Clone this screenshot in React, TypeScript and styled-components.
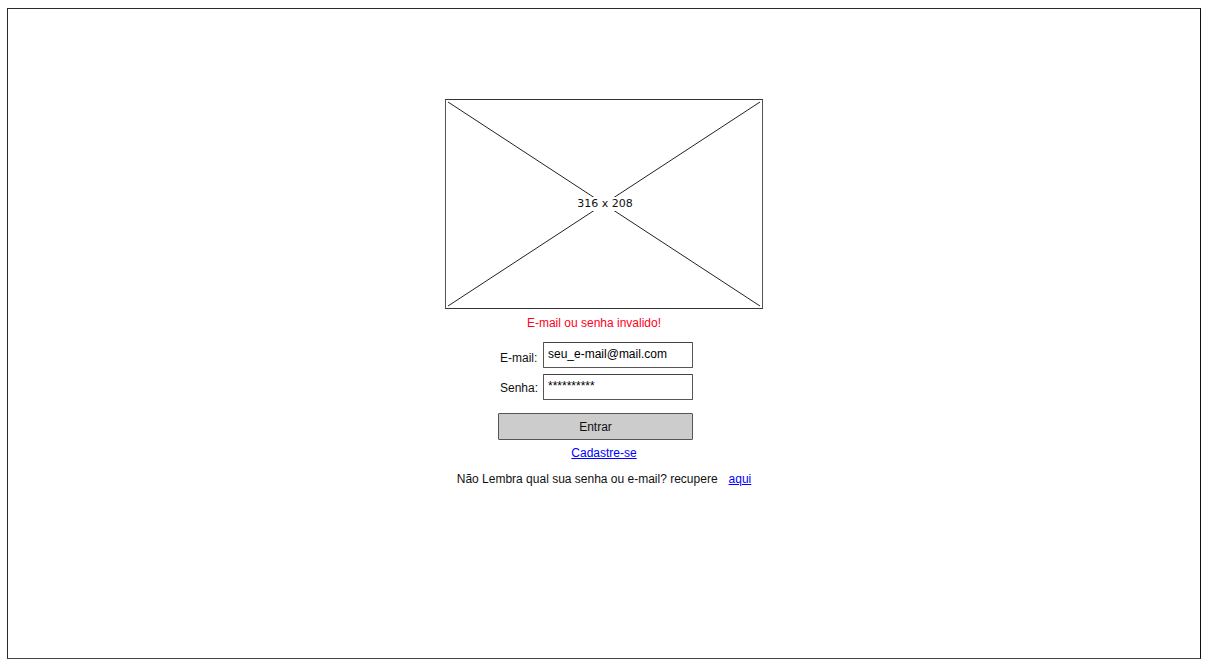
import React from "react";
import styled, { createGlobalStyle } from "styled-components";

const Global = createGlobalStyle`
  html, body { margin: 0; padding: 0; background: #fff; overflow: hidden; }
  body { font-family: "Liberation Sans", Arial, sans-serif; }
`;

const Frame = styled.div`
  margin: 8px 0 0 7px;
  width: 1194px;
  height: 651px;
  box-sizing: border-box;
  border: 1px solid #2a2a2a;
  border-right-color: #111;
  border-bottom-color: #444;
  display: flex;
  flex-direction: column;
  align-items: center;
  padding-top: 90px;
`;

const Placeholder = styled.div`
  position: relative;
  width: 316px;
  height: 208px;
  border: 1px solid #555;
  border-top-color: #333;
  border-bottom-color: #333;
  display: flex;
  align-items: center;
  justify-content: center;
`;

const Cross = styled.svg`
  position: absolute;
  inset: 0;
  width: 100%;
  height: 100%;
`;

const SizeLabel = styled.span`
  position: relative;
  background: #fff;
  padding: 0 3px;
  font-family: "DejaVu Sans", Tahoma, sans-serif;
  font-size: 11px;
  line-height: 14px;
  color: #111;
  margin-left: 2px;
`;

const ErrorText = styled.div`
  margin-top: 6px;
  font-size: 12px;
  line-height: 16px;
  color: #ff0022;
  margin-right: 20px;
`;

const Form = styled.div`
  margin-top: 11px;
  margin-right: 16px;
  display: grid;
  grid-template-columns: 44px 150px;
  row-gap: 6px;
  width: 194px;
`;

const Label = styled.label<{ $offset: number }>`
  font-size: 12px;
  line-height: 16px;
  color: #111;
  align-self: center;
  padding-left: 1px;
  padding-top: ${(p) => p.$offset}px;
`;

const Input = styled.div`
  box-sizing: border-box;
  height: 26px;
  border: 1.5px solid #555;
  border-top-color: #444;
  border-radius: 1px;
  padding: 3px 0 0 4px;
  font-size: 12px;
  line-height: 16px;
  color: #000;
  white-space: nowrap;
`;

const Button = styled.div`
  grid-column: 1 / span 2;
  margin-top: 7px;
  margin-left: -1px;
  box-sizing: border-box;
  height: 27px;
  background: #cccccc;
  border: 1.5px solid #555;
  border-radius: 1px;
  display: flex;
  align-items: center;
  justify-content: center;
  font-size: 12px;
  color: #111;
`;

const Link = styled.a`
  color: #0000ff;
  text-decoration: underline;
  font-size: 12px;
  line-height: 16px;
  cursor: pointer;
`;

const SignupRow = styled.div`
  margin-top: 4px;
  line-height: 16px;
`;

const RecoverRow = styled.div`
  margin-top: 10px;
  font-size: 12px;
  line-height: 16px;
  color: #111;
  display: flex;
  gap: 11px;
`;

export default function App() {
  return (
    <>
      <Global />
      <Frame>
        <Placeholder>
          <Cross viewBox="0 0 316 208" preserveAspectRatio="none">
            <line x1="2" y1="2" x2="314" y2="206" stroke="#222" strokeWidth="1" />
            <line x1="314" y1="2" x2="2" y2="206" stroke="#222" strokeWidth="1" />
          </Cross>
          <SizeLabel>316 x 208</SizeLabel>
        </Placeholder>
        <ErrorText>E-mail ou senha invalido!</ErrorText>
        <Form>
          <Label $offset={6}>E-mail:</Label>
          <Input>seu_e-mail@mail.com</Input>
          <Label $offset={2}>Senha:</Label>
          <Input>**********</Input>
          <Button>Entrar</Button>
        </Form>
        <SignupRow>
          <Link>Cadastre-se</Link>
        </SignupRow>
        <RecoverRow>
          <span>Não Lembra qual sua senha ou e-mail? recupere</span>
          <Link>aqui</Link>
        </RecoverRow>
      </Frame>
    </>
  );
}
